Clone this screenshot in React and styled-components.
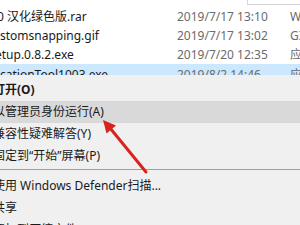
import React from 'react';
import styled, { createGlobalStyle } from 'styled-components';

const GlobalStyle = createGlobalStyle`
  html, body {
    margin: 0;
    padding: 0;
    background: #ffffff;
  }
  body {
    font-family: "Noto Sans", "Noto Sans CJK SC", sans-serif;
    font-size: 12px;
    color: #1a1a1a;
  }
`;

const files = [
  { name: '0 汉化绿色版.rar', indent: -3, date: '2019/7/17 13:10', type: 'WinRAR 压缩文件' },
  { name: 'stomsnapping.gif', indent: 0, date: '2019/7/17 13:02', type: 'GIF 文件' },
  { name: 'etup.0.8.2.exe', indent: -5, date: '2019/7/20 12:35', type: '应用程序' },
  { name: 'cationTool1003.exe', indent: 0, date: '2019/8/2 14:46', type: '应用程序', selected: true },
];

const menu = [
  { label: '打开(O)', bold: true },
  { label: '以管理员身份运行(A)', hover: true },
  { label: '兼容性疑难解答(Y)' },
  { label: '固定到“开始”屏幕(P)' },
  { sep: true },
  { label: '使用 Windows Defender扫描...' },
  { label: '共享' },
  { label: '添加到压缩文件(A)...' },
];

function App() {
  return (
    <Screen>
      <GlobalStyle />
      <HeaderEdge />
      <FileList>
        {files.map((f) => (
          <FileRow key={f.name} selected={f.selected}>
            <Name indent={f.indent}>{f.name}</Name>
            <Meta>{f.date}</Meta>
            <Meta>{f.type}</Meta>
          </FileRow>
        ))}
      </FileList>
      <Menu>
        {menu.map((m, i) =>
          m.sep ? (
            <Separator key={i} />
          ) : (
            <MenuItem key={i} bold={m.bold} hover={m.hover}>
              <span>{m.label}</span>
            </MenuItem>
          )
        )}
      </Menu>
      <Arrow width="300" height="225" viewBox="0 0 300 225">
        <line x1="146" y1="172" x2="110" y2="128" stroke="#d8231f" strokeWidth="3" strokeLinecap="round" />
        <polygon points="103,120 116,125.5 106.5,133.5" fill="#d8231f" />
      </Arrow>
    </Screen>
  );
}

export default App;

const Screen = styled.div`
  position: relative;
  width: 300px;
  height: 225px;
  overflow: hidden;
  background: #ffffff;
`;

const HeaderEdge = styled.div`
  position: absolute;
  left: 247px;
  top: -10px;
  width: 60px;
  height: 13px;
  border: 1px solid #d6d6d6;
  background: #ffffff;
`;

const FileList = styled.div`
  box-sizing: border-box;
  height: 75px;
  padding-top: 6px;
  overflow: hidden;
`;

const FileRow = styled.div`
  display: grid;
  grid-template-columns: 177px 113px 1fr;
  align-items: center;
  height: 19px;
  box-sizing: border-box;
  margin-top: ${(p) => (p.selected ? '1px' : '0')};
  background: ${(p) => (p.selected ? '#cce8ff' : 'transparent')};
  border-top: 1px solid ${(p) => (p.selected ? '#cce8ff' : 'transparent')};
  white-space: nowrap;
  line-height: 17px;
`;

const Name = styled.span`
  margin-left: ${(p) => p.indent}px;
  color: #1a1a1a;
`;

const Meta = styled.span`
  color: #6b6b6b;
  overflow: hidden;
`;

const Menu = styled.div`
  background: #f0f0f0;
  margin-left: -7px;
  padding-top: 4px;
  height: 160px;
  overflow: hidden;
`;

const MenuItem = styled.div`
  display: flex;
  align-items: center;
  flex-shrink: 0;
  height: 22px;
  line-height: 14px;
  white-space: nowrap;
  font-weight: ${(p) => (p.bold ? 700 : 400)};
  background: ${(p) => (p.hover ? '#d9d9d9' : 'transparent')};
  color: #1a1a1a;
`;

const Separator = styled.div`
  height: 6px;
  &::before {
    content: '';
    display: block;
    margin-top: 2px;
    height: 1px;
    background: #a0a0a0;
  }
`;

const Arrow = styled.svg`
  position: absolute;
  left: 0;
  top: 0;
  pointer-events: none;
`;
